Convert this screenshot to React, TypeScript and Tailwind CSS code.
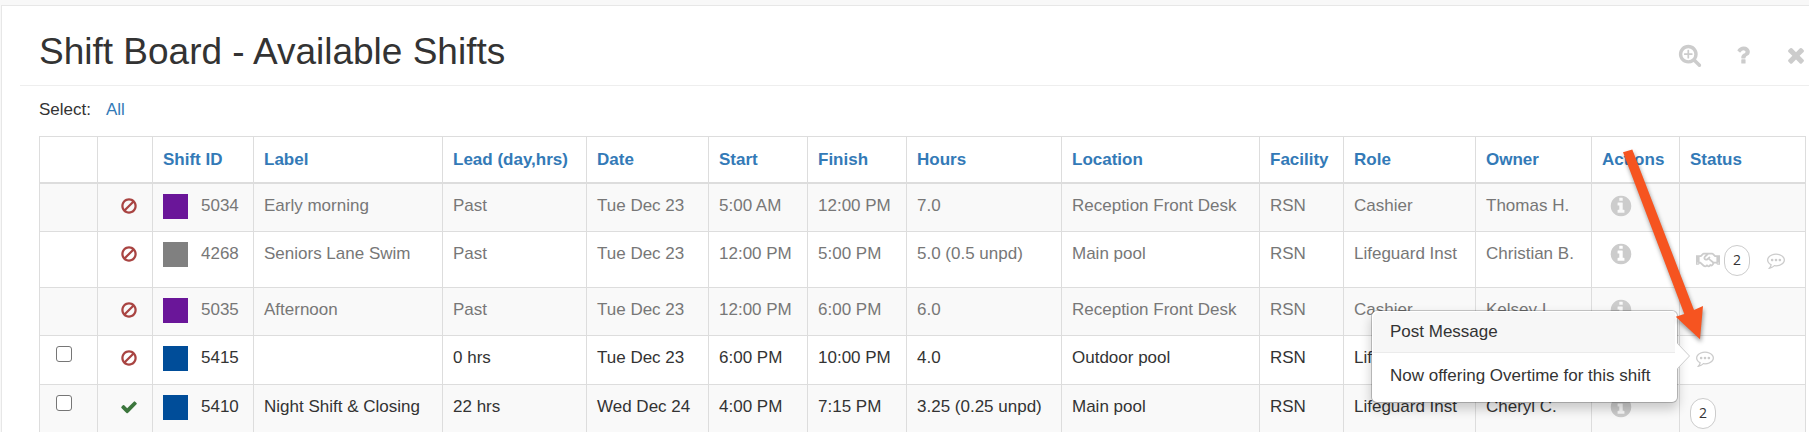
import type { ReactNode } from "react";
import { FaRegHandshake } from "react-icons/fa";

type Shift = {
  id: number;
  color: string;
  label: string;
  lead: string;
  date: string;
  start: string;
  finish: string;
  hours: string;
  location: string;
  facility: string;
  role: string;
  owner: string;
  past?: boolean;
  approved?: boolean;
  offers?: number;
  trade?: boolean;
  message?: string;
  open?: boolean;
};

const shifts: Shift[] = [
  { id: 5034, color: "bg-[#6a1699]", label: "Early morning", lead: "Past", date: "Tue Dec 23", start: "5:00 AM", finish: "12:00 PM", hours: "7.0", location: "Reception Front Desk", facility: "RSN", role: "Cashier", owner: "Thomas H.", past: true },
  { id: 4268, color: "bg-[#808080]", label: "Seniors Lane Swim", lead: "Past", date: "Tue Dec 23", start: "12:00 PM", finish: "5:00 PM", hours: "5.0 (0.5 unpd)", location: "Main pool", facility: "RSN", role: "Lifeguard Inst", owner: "Christian B.", past: true, trade: true, offers: 2, message: "Posted" },
  { id: 5035, color: "bg-[#6a1699]", label: "Afternoon", lead: "Past", date: "Tue Dec 23", start: "12:00 PM", finish: "6:00 PM", hours: "6.0", location: "Reception Front Desk", facility: "RSN", role: "Cashier", owner: "Kelsey I.", past: true },
  { id: 5415, color: "bg-[#004d99]", label: "", lead: "0 hrs", date: "Tue Dec 23", start: "6:00 PM", finish: "10:00 PM", hours: "4.0", location: "Outdoor pool", facility: "RSN", role: "Lifeguard Inst", owner: "", message: "Now offering Overtime for this shift", open: true },
  { id: 5410, color: "bg-[#004d99]", label: "Night Shift & Closing", lead: "22 hrs", date: "Wed Dec 24", start: "4:00 PM", finish: "7:15 PM", hours: "3.25 (0.25 unpd)", location: "Main pool", facility: "RSN", role: "Lifeguard Inst", owner: "Cheryl C.", approved: true, offers: 2 },
];

const columns = [
  { title: "", width: "w-[58px]" },
  { title: "", width: "w-[55px]" },
  { title: "Shift ID", width: "w-[101px]" },
  { title: "Label", width: "w-[189px]" },
  { title: "Lead (day,hrs)", width: "w-[144px]" },
  { title: "Date", width: "w-[122px]" },
  { title: "Start", width: "w-[99px]" },
  { title: "Finish", width: "w-[99px]" },
  { title: "Hours", width: "w-[155px]" },
  { title: "Location", width: "w-[198px]" },
  { title: "Facility", width: "w-[84px]" },
  { title: "Role", width: "w-[132px]" },
  { title: "Owner", width: "w-[116px]" },
  { title: "Actions", width: "w-[88px]" },
  { title: "Status", width: "w-[126px]" },
];

const icons = {
  zoom: "M1088 800v64q0 13-9.5 22.5t-22.5 9.5h-224v224q0 13-9.5 22.5t-22.5 9.5h-64q-13 0-22.5-9.5t-9.5-22.5v-224h-224q-13 0-22.5-9.5t-9.5-22.5v-64q0-13 9.5-22.5t22.5-9.5h224v-224q0-13 9.5-22.5t22.5-9.5h64q13 0 22.5 9.5t9.5 22.5v224h224q13 0 22.5 9.5t9.5 22.5zm128 32q0-185-131.5-316.5t-316.5-131.5-316.5 131.5-131.5 316.5 131.5 316.5 316.5 131.5 316.5-131.5 131.5-316.5zm512 832q0 53-37.5 90.5t-90.5 37.5q-54 0-90-38l-343-342q-179 124-399 124-143 0-273.5-55.5t-225-150-150-225-55.5-273.5 55.5-273.5 150-225 225-150 273.5-55.5 273.5 55.5 225 150 150 225 55.5 273.5q0 220-124 399l343 343q37 37 37 90z",
  question: "M1088 1256v240q0 16-12 28t-28 12h-240q-16 0-28-12t-12-28v-240q0-16 12-28t28-12h240q16 0 28 12t12 28zm316-600q0 54-15.5 101t-35 76.5-55 59.5-57.5 43.5-61 35.5q-41 23-68.5 65t-27.5 67q0 17-12 32.5t-28 15.5h-240q-15 0-25.5-18.5t-10.5-37.5v-45q0-83 65-156.5t143-108.5q59-27 84-56t25-76q0-42-46.5-74t-107.5-32q-65 0-108 29-35 25-107 115-13 16-31 16-12 0-25-8l-164-125q-13-10-15.5-25t5.5-28q160-266 464-266 80 0 161 31t146 83 106 127.5 41 158.5z",
  times: "M1490 1322q0 40-28 68l-136 136q-28 28-68 28t-68-28l-294-294-294 294q-28 28-68 28t-68-28l-136-136q-28-28-28-68t28-68l294-294-294-294q-28-28-28-68t28-68l136-136q28-28 68-28t68 28l294 294 294-294q28-28 68-28t68 28l136 136q28 28 28 68t-28 68l-294 294 294 294q28 28 28 68z",
  info: "M1152 1376v-160q0-14-9-23t-23-9h-96v-512q0-14-9-23t-23-9h-320q-14 0-23 9t-9 23v160q0 14 9 23t23 9h96v320h-96q-14 0-23 9t-9 23v160q0 14 9 23t23 9h448q14 0 23-9t9-23zm-128-896v-160q0-14-9-23t-23-9h-192q-14 0-23 9t-9 23v160q0 14 9 23t23 9h192q14 0 23-9t9-23zm640 416q0 209-103 385.5t-279.5 279.5-385.5 103-385.5-103-279.5-279.5-103-385.5 103-385.5 279.5-279.5 385.5-103 385.5 103 279.5 279.5 103 385.5z",
  ban: "M1440 893q0-161-87-295l-754 753q137 89 297 89 111 0 211.5-43.5t173.5-116.5 116-174.5 43-212.5zm-999 299l755-754q-135-91-300-91-148 0-273 73t-198 199-73 274q0 162 89 299zm1223-299q0 157-61 300t-163.5 246-245 164-298.5 61-298.5-61-245-164-163.5-246-61-300 61-299.5 163.5-245.5 245-164 298.5-61 298.5 61 245 164 163.5 245.5 61 299.5z",
  check: "M1671 566q0 40-28 68l-724 724-136 136q-28 28-68 28t-68-28l-136-136-362-362q-28-28-28-68t28-68l136-136q28-28 68-28t68 28l294 295 656-657q28-28 68-28t68 28l136 136q28 28 28 68z",
  comment: "M640 896q0 53-37.5 90.5t-90.5 37.5-90.5-37.5-37.5-90.5 37.5-90.5 90.5-37.5 90.5 37.5 37.5 90.5zm384 0q0 53-37.5 90.5t-90.5 37.5-90.5-37.5-37.5-90.5 37.5-90.5 90.5-37.5 90.5 37.5 37.5 90.5zm384 0q0 53-37.5 90.5t-90.5 37.5-90.5-37.5-37.5-90.5 37.5-90.5 90.5-37.5 90.5 37.5 37.5 90.5zm-512-512q-204 0-381.5 69.5t-282 187.5-104.5 255q0 112 71.5 213.5t201.5 175.5l87 50-27 96q-24 91-70 172 152-63 275-171l43-38 57 6q69 8 130 8 204 0 381.5-69.5t282-187.5 104.5-255-104.5-255-282-187.5-381.5-69.5zm896 512q0 174-120 321.5t-326 233-450 85.5q-70 0-145-8-198 175-460 242-49 14-114 22h-5q-15 0-27-10.5t-16-27.5v-1q-3-4-.5-12t2-10 4.5-9.5l6-9 7-8.5 8-9q7-8 31-34.5t34.5-38 31-39.5 32.5-51 27-59 26-76q-157-89-247.5-220t-90.5-281q0-174 120-321.5t326-233 450-85.5 450 85.5 326 233 120 321.5z",
};

function Icon({ name, className }: { name: keyof typeof icons; className: string }) {
  return (
    <svg viewBox="0 0 1792 1792" fill="currentColor" aria-hidden="true" className={className}>
      <path d={icons[name]} />
    </svg>
  );
}

function Cell({ children }: { children?: ReactNode }) {
  return <td className="border border-[#ddd] px-[10px] pt-[10px] align-top whitespace-nowrap">{children}</td>;
}

function Popover({ message }: { message: string }) {
  return (
    <div
      role="tooltip"
      className="absolute -top-[39px] right-full z-10 mr-[18px] w-[307px] rounded-md border border-black/20 bg-white bg-clip-padding p-px text-[#333] shadow-[0_6px_12px_rgba(0,0,0,0.2)]"
    >
      <h3 className="mr-px rounded-tl-md border-b border-[#ebebeb] bg-[#f7f7f7] px-[17px] py-2 leading-6">
        Post Message
      </h3>
      <p className="px-[17px] pt-[11px] pb-[13px] leading-6">{message}</p>
      <svg viewBox="0 0 13 26" className="absolute top-8 left-full h-[26px] w-[13px]">
        <path d="M0 0L12.5 13L0 26z" fill="#fff" />
        <path d="M0 0L12.5 13L0 26" fill="none" stroke="#ccc" />
      </svg>
    </div>
  );
}

// Callout arrow that points down at the open message
function Pointer() {
  return (
    <svg
      viewBox="0 0 90 200"
      className="pointer-events-none absolute -top-[200px] -left-[76px] z-20 h-[200px] w-[90px] max-w-none drop-shadow-[1px_3px_2px_rgba(0,0,0,0.4)]"
    >
      <path d="M3 3.300L12.300 0.500L74 161L83 157L80 190.300L55.700 167.700L64.300 165z" fill="#f65420" />
    </svg>
  );
}

function Offers({ count }: { count: number }) {
  return (
    <span className="flex h-[31px] w-[26px] items-center justify-center rounded-full border border-[#ccc] bg-white font-['Open_Sans',sans-serif] text-sm text-[#333]">
      {count}
    </span>
  );
}

function Status({ shift }: { shift: Shift }) {
  return (
    <div className="flex items-center pt-[3px] pb-[11px]">
      {shift.trade && <FaRegHandshake className="mr-1 ml-[6px] size-6 text-[#ccc]" />}
      {shift.offers && <Offers count={shift.offers} />}
      {shift.message && (
        <div className={shift.open ? "relative ml-[6px]" : "ml-[17px]"}>
          <button type="button" aria-label="Message" className="block text-[#ccc]">
            <Icon name="comment" className="size-[18px]" />
          </button>
          {shift.open && <Popover message={shift.message} />}
          {shift.open && <Pointer />}
        </div>
      )}
    </div>
  );
}

function ShiftRow({ shift }: { shift: Shift }) {
  return (
    <tr className={`odd:bg-[#f9f9f9] ${shift.past ? "h-12 text-[#777]" : "h-[49px] text-[#333]"}`}>
      <Cell>
        {!shift.past && (
          <input
            type="checkbox"
            aria-label={`Select shift ${shift.id}`}
            className="ml-[6px] block size-4 appearance-none rounded-[3px] border border-[#767676] bg-white"
          />
        )}
      </Cell>
      <Cell>
        {shift.approved ? (
          <Icon name="check" className="mt-[3px] ml-3 size-[18px] text-[#3c763d]" />
        ) : (
          <Icon name="ban" className="mt-[3px] ml-3 size-[18px] text-[#a94442]" />
        )}
      </Cell>
      <Cell>
        <div className="flex items-start gap-[13px]">
          <span className={`size-[25px] ${shift.color}`} />
          {shift.id}
        </div>
      </Cell>
      <Cell>{shift.label}</Cell>
      <Cell>{shift.lead}</Cell>
      <Cell>{shift.date}</Cell>
      <Cell>{shift.start}</Cell>
      <Cell>{shift.finish}</Cell>
      <Cell>{shift.hours}</Cell>
      <Cell>{shift.location}</Cell>
      <Cell>{shift.facility}</Cell>
      <Cell>{shift.role}</Cell>
      <Cell>{shift.owner}</Cell>
      <Cell>
        <button type="button" aria-label="Details" className="ml-[7px] block text-[#ccc]">
          <Icon name="info" className="size-6" />
        </button>
      </Cell>
      <Cell>
        <Status shift={shift} />
      </Cell>
    </tr>
  );
}

export default function App() {
  return (
    <div className="h-screen overflow-hidden bg-[#f8f8f8] pt-[5px] pl-px font-['Liberation_Sans',Arial,sans-serif] text-[17px] leading-[23px] text-[#333]">
      <main className="min-h-full border-t border-l border-[#e7e7e7] bg-white pl-[18px]">
        <header className="flex items-center justify-between border-b border-[#eee] pt-6 pb-[11px] pl-[19px]">
          <h1 className="text-[37px] leading-[44px]">Shift Board - Available Shifts</h1>
          <div className="flex gap-[29px] pt-[6px] pr-px text-[#ccc]">
            <button type="button" aria-label="Zoom">
              <Icon name="zoom" className="size-6" />
            </button>
            <button type="button" aria-label="Help">
              <Icon name="question" className="size-6" />
            </button>
            <button type="button" aria-label="Close">
              <Icon name="times" className="size-6" />
            </button>
          </div>
        </header>
        <div className="pt-3 pr-[3px] pl-[19px]">
          <div className="flex gap-[15px] pb-[15px]">
            <span>Select:</span>
            <a href="#all" className="text-[#337ab7]">All</a>
          </div>
          <table className="w-full table-fixed border-collapse">
            <colgroup>
              {columns.map((column, i) => (
                <col key={i} className={column.width} />
              ))}
            </colgroup>
            <thead>
              <tr>
                {columns.map((column, i) => (
                  <th
                    key={i}
                    className="border border-b-2 border-[#ddd] px-[10px] py-[11px] text-left font-bold whitespace-nowrap text-[#337ab7]"
                  >
                    {column.title && <a href="#sort">{column.title}</a>}
                  </th>
                ))}
              </tr>
            </thead>
            <tbody>
              {shifts.map((shift) => (
                <ShiftRow key={shift.id} shift={shift} />
              ))}
            </tbody>
          </table>
        </div>
      </main>
    </div>
  );
}
